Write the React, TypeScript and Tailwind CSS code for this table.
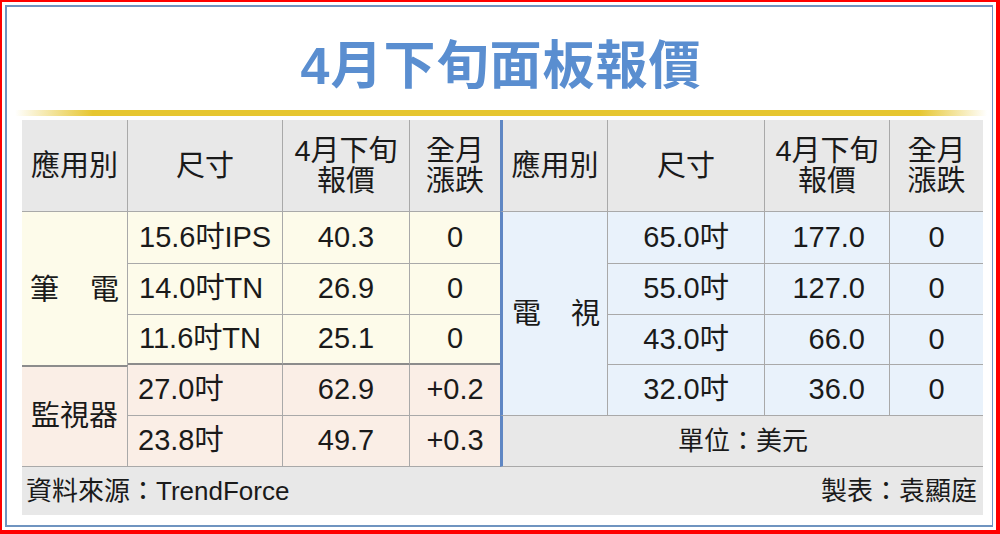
import React from "react";

const F = { fontFamily: '"Liberation Sans", "Noto Sans CJK TC", sans-serif' };

const B = "border-[#a9a9a9]";

export default function App() {
  const leftRows = [
    { size: "15.6吋IPS", price: "40.3", chg: "0" },
    { size: "14.0吋TN", price: "26.9", chg: "0" },
    { size: "11.6吋TN", price: "25.1", chg: "0" },
  ];
  const monRows = [
    { size: "27.0吋", price: "62.9", chg: "+0.2" },
    { size: "23.8吋", price: "49.7", chg: "+0.3" },
  ];
  const tvRows = [
    { size: "65.0吋", price: "177.0", chg: "0" },
    { size: "55.0吋", price: "127.0", chg: "0" },
    { size: "43.0吋", price: "66.0", chg: "0" },
    { size: "32.0吋", price: "36.0", chg: "0" },
  ];

  const hdr = `flex items-center justify-center bg-[#e8e8e8] border-b ${B} text-center leading-[30px]`;

  return (
    <div
      className="w-[1000px] h-[534px] bg-white border-l-2 border-t-2 border-r-4 border-b-4 border-[#ff0000] p-[3px] text-[#1a1a1a]"
      style={F}
    >
      <div className="w-full h-full border-2 border-r border-[#6f94c0] flex flex-col pl-[15px] pr-[12px]">
        <div className="h-[103px] flex items-center justify-center pt-[14px]">
          <h1 className="text-[52px] font-bold text-[#5a8ed0] leading-none tracking-[1px]">
            4月下旬面板報價
          </h1>
        </div>
        <div className="h-[6px] -mx-[7px] bg-[linear-gradient(to_right,#ffffff_0%,#e6c630_8%,#e6c630_93%,#ffffff_100%)]" />
        <div className="mt-[4px] grid grid-cols-[106px_155px_127px_90px_108px_157px_125px_93px] grid-rows-[92px_52px_51px_50px_51px_51px_48px] text-[29px]">
          {/* header */}
          <div className={`${hdr} border-r`}>應用別</div>
          <div className={`${hdr} border-r`}>尺寸</div>
          <div className={`${hdr} border-r`}>4月下旬<br />報價</div>
          <div className={`${hdr}`}>全月<br />漲跌</div>
          <div className={`${hdr} border-r border-l-[3px] border-l-[#5f87c4]`}>應用別</div>
          <div className={`${hdr} border-r`}>尺寸</div>
          <div className={`${hdr} border-r`}>4月下旬<br />報價</div>
          <div className={`${hdr}`}>全月<br />漲跌</div>

          {/* 筆電 group label */}
          <div
            className={`col-start-1 row-start-2 row-span-3 bg-[#fdfbea] border-r ${B} flex items-center justify-between px-[8px] pt-[4px]`}
          >
            <span>筆</span>
            <span>電</span>
          </div>
          {leftRows.map((r, i) => (
            <React.Fragment key={r.size}>
              <div
                className={`col-start-2 bg-[#fdfbea] border-r ${i < 2 ? `border-b ${B}` : "border-b-2 border-b-[#8c8c8c]"} ${B} flex items-center pl-[11px]`}
                style={{ gridRowStart: i + 2 }}
              >
                {r.size}
              </div>
              <div
                className={`col-start-3 bg-[#fdfbea] border-r ${i < 2 ? `border-b ${B}` : "border-b-2 border-b-[#8c8c8c]"} ${B} flex items-center justify-center`}
                style={{ gridRowStart: i + 2 }}
              >
                {r.price}
              </div>
              <div
                className={`col-start-4 bg-[#fdfbea] ${i < 2 ? `border-b ${B}` : "border-b-2 border-b-[#8c8c8c]"} flex items-center justify-center`}
                style={{ gridRowStart: i + 2 }}
              >
                {r.chg}
              </div>
            </React.Fragment>
          ))}

          {/* 監視器 */}
          <div
            className={`col-start-1 row-start-5 row-span-2 bg-[#faeee6] border-r border-b border-t-2 border-t-[#8c8c8c] ${B} flex items-center justify-center`}
          >
            監視器
          </div>
          {monRows.map((r, i) => (
            <React.Fragment key={r.size}>
              <div
                className={`col-start-2 bg-[#faeee6] border-r border-b ${B} flex items-center pl-[10px]`}
                style={{ gridRowStart: i + 5 }}
              >
                {r.size}
              </div>
              <div
                className={`col-start-3 bg-[#faeee6] border-r border-b ${B} flex items-center justify-center`}
                style={{ gridRowStart: i + 5 }}
              >
                {r.price}
              </div>
              <div
                className={`col-start-4 bg-[#faeee6] border-b ${B} flex items-center justify-center`}
                style={{ gridRowStart: i + 5 }}
              >
                {r.chg}
              </div>
            </React.Fragment>
          ))}

          {/* 電視 */}
          <div
            className={`col-start-5 row-start-2 row-span-4 bg-[#e9f2fb] border-l-[3px] border-l-[#5f87c4] border-r border-b ${B} flex items-center justify-between pl-[9px] pr-[7px] pt-[2px]`}
          >
            <span>電</span>
            <span>視</span>
          </div>
          {tvRows.map((r, i) => (
            <React.Fragment key={r.size}>
              <div
                className={`col-start-6 bg-[#e9f2fb] border-r border-b ${B} flex items-center justify-center`}
                style={{ gridRowStart: i + 2 }}
              >
                {r.size}
              </div>
              <div
                className={`col-start-7 bg-[#e9f2fb] border-r border-b ${B} flex items-center justify-end pr-[24px]`}
                style={{ gridRowStart: i + 2 }}
              >
                {r.price}
              </div>
              <div
                className={`col-start-8 bg-[#e9f2fb] border-b ${B} flex items-center justify-center`}
                style={{ gridRowStart: i + 2 }}
              >
                {r.chg}
              </div>
            </React.Fragment>
          ))}

          {/* unit */}
          <div
            className={`col-start-5 col-span-4 row-start-6 bg-[#e8e8e8] border-l-[3px] border-l-[#5f87c4] border-b ${B} flex items-center justify-center text-[26px]`}
          >
            單位：美元
          </div>

          {/* footer */}
          <div className="col-start-1 col-span-8 row-start-7 bg-[#e8e8e8] flex items-center justify-between pl-[4px] pr-[6px] text-[26px]">
            <span>資料來源：TrendForce</span>
            <span>製表：袁顯庭</span>
          </div>
        </div>
      </div>
    </div>
  );
}
